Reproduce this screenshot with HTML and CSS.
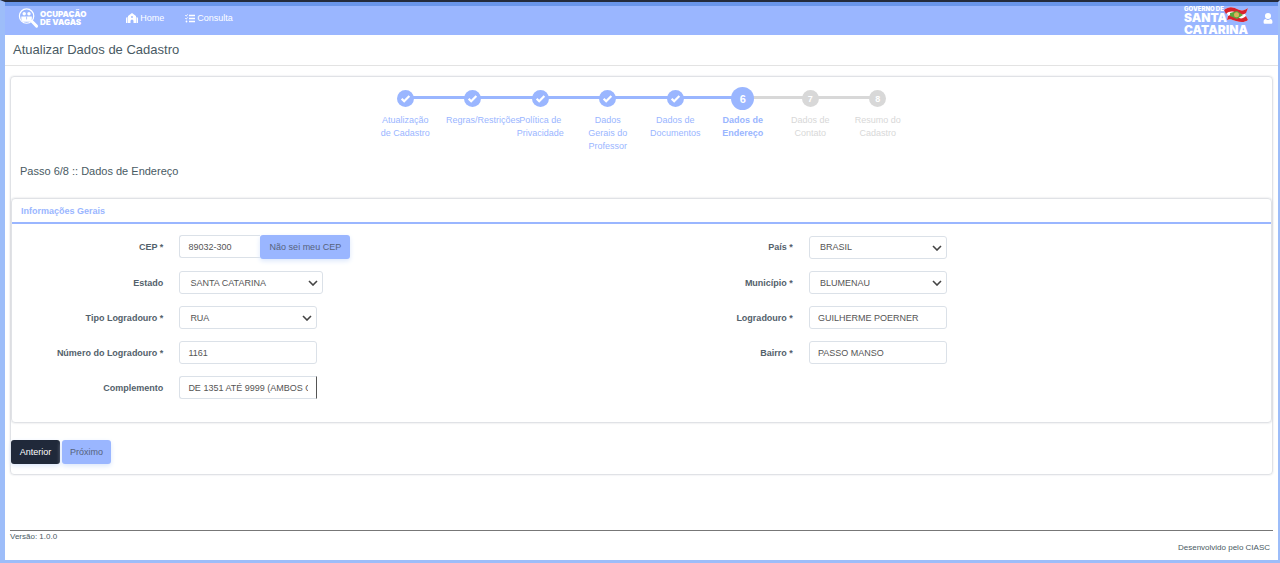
FILE: index.html
```html
<!DOCTYPE html>
<html lang="pt-BR">
<head>
    <meta charset="UTF-8">
    <meta name="viewport" content="width=device-width, initial-scale=1.0">
    <title>Atualizar Dados de Cadastro</title>
    <link rel="stylesheet" href="styles.css">
</head>
<body>
<div class="page">

    <!-- Top bar -->
    <header class="topbar">
        <a href="#" class="brand">
            <svg class="brand-icon" viewBox="0 0 22 22" fill="none" stroke="#fff">
                <circle cx="9" cy="9" r="7.500" stroke-width="1.300"/>
                <circle cx="6.500" cy="6.500" r="1.800" fill="#fff" stroke="none"/>
                <circle cx="11.500" cy="6.500" r="1.800" fill="#fff" stroke="none"/>
                <path d="M3.500 9.500h11v2a3.500 3.500 0 0 1-3.500 3.500H7a3.500 3.500 0 0 1-3.500-3.500z" fill="#fff" stroke="none"/>
                <path d="M9 9.500v3" stroke="#9ab6ff" stroke-width="0.800"/>
                <path d="M14.500 14.500l5 5" stroke-width="3" stroke-linecap="round"/>
            </svg>
            <span class="brand-text">OCUPAÇÃO<br>DE VAGAS</span>
        </a>
        <nav class="menu">
            <a href="#" class="menu-link">
                <svg class="icon-home" viewBox="0 0 24 20" fill="#fff">
                    <path d="M12 0l8 6v14h-5v-4a3 3 0 0 0-6 0v4H4V6z"/>
                    <path d="M3 8v12H1a1 1 0 0 1-1-1v-8a3 3 0 0 1 3-3zM21 8v12h2a1 1 0 0 0 1-1v-8a3 3 0 0 0-3-3z"/>
                    <circle cx="12" cy="8" r="1.800" fill="#9ab6ff"/>
                </svg>
                Home
            </a>
            <a href="#" class="menu-link">
                <svg class="icon-list" viewBox="0 0 20 18" fill="none" stroke="#fff" stroke-width="3">
                    <path d="M8 3h12M8 9h12M8 15h12"/>
                    <path d="M0.500 2.500l1.700 1.700L5.500 1M0.500 8.500l1.700 1.700L5.500 7" stroke-width="2"/>
                    <circle cx="3" cy="15" r="1.800" fill="#fff" stroke="none"/>
                </svg>
                Consulta
            </a>
        </nav>
        <div class="gov">
            <span class="gov-small">GOVERNO DE</span>
            <span class="gov-big">SANTA</span>
            <span class="gov-big">CATARINA</span>
            <svg class="gov-flag" viewBox="0 0 26 16">
                <path d="M1 3C6-1 10 0 14 2s7 2 11-1l-3 6 3 6c-4 3-8 2-12 1S8 11 4 13l1-5z" fill="#fff"/>
                <path d="M1 3C6-1 10 0 14 2s7 2 11-1l-2 5c-3 2-7 2-10 0S6 4 3 7z" fill="#d8232f"/>
                <path d="M4 13l1-4c3-2 6-1 9 1s6 2 9-1l2 4c-4 3-8 2-12 1S8 11 4 13z" fill="#d8232f"/>
                <path d="M7 6l7-2 6 4-6 4-7-3z" fill="#5da63c"/>
                <circle cx="13.500" cy="7.700" r="2.500" fill="#d9b35a"/>
            </svg>
        </div>
        <button type="button" class="user-btn" aria-label="Usuário">
            <svg viewBox="0 0 16 20" fill="#fff">
                <circle cx="8" cy="5.500" r="5.500"/>
                <path d="M4 11a6 6 0 0 0 8 0c2.500 0 4 2 4 4.500v2a2 2 0 0 1-2 2H2a2 2 0 0 1-2-2v-2C0 13 1.500 11 4 11z"/>
            </svg>
        </button>
    </header>

    <div class="title-bar">
        <h1>Atualizar Dados de Cadastro</h1>
    </div>

    <main class="content">
        <form class="wizard">

            <!-- Steps -->
            <ol class="steps">
                <li class="step done">
                    <span class="dot"><svg viewBox="0 0 10 10"><path d="M1.500 5.200l2.300 2.300 4.700-4.700"/></svg></span>
                    <span class="step-label">Atualização de Cadastro</span>
                </li>
                <li class="step done">
                    <span class="dot"><svg viewBox="0 0 10 10"><path d="M1.500 5.200l2.300 2.300 4.700-4.700"/></svg></span>
                    <span class="step-label">Regras/Restrições</span>
                </li>
                <li class="step done">
                    <span class="dot"><svg viewBox="0 0 10 10"><path d="M1.500 5.200l2.300 2.300 4.700-4.700"/></svg></span>
                    <span class="step-label">Política de Privacidade</span>
                </li>
                <li class="step done">
                    <span class="dot"><svg viewBox="0 0 10 10"><path d="M1.500 5.200l2.300 2.300 4.700-4.700"/></svg></span>
                    <span class="step-label">Dados Gerais do Professor</span>
                </li>
                <li class="step done">
                    <span class="dot"><svg viewBox="0 0 10 10"><path d="M1.500 5.200l2.300 2.300 4.700-4.700"/></svg></span>
                    <span class="step-label">Dados de Documentos</span>
                </li>
                <li class="step active">
                    <span class="dot">6</span>
                    <span class="step-label">Dados de Endereço</span>
                </li>
                <li class="step">
                    <span class="dot">7</span>
                    <span class="step-label">Dados de Contato</span>
                </li>
                <li class="step">
                    <span class="dot">8</span>
                    <span class="step-label">Resumo do Cadastro</span>
                </li>
            </ol>

            <h2 class="step-title">Passo 6/8 :: Dados de Endereço</h2>

            <!-- Address data -->
            <section class="panel">
                <h3 class="panel-title">Informações Gerais</h3>
                <div class="panel-body">
                    <div class="column">
                        <div class="row row-tall">
                            <label for="cep">CEP *</label>
                            <div class="field">
                                <input type="text" id="cep" class="input input-cep" value="89032-300">
                                <button type="button" class="btn btn-primary btn-cep">Não sei meu CEP</button>
                            </div>
                        </div>
                        <div class="row">
                            <label for="estado">Estado</label>
                            <div class="field">
                                <div class="select-box select-wide">
                                    <select id="estado" class="input"><option>SANTA CATARINA</option></select>
                                    <svg class="chevron" viewBox="0 0 10 6"><path d="M1 1l4 4 4-4"/></svg>
                                </div>
                            </div>
                        </div>
                        <div class="row">
                            <label for="tipo">Tipo Logradouro *</label>
                            <div class="field">
                                <div class="select-box">
                                    <select id="tipo" class="input"><option>RUA</option></select>
                                    <svg class="chevron" viewBox="0 0 10 6"><path d="M1 1l4 4 4-4"/></svg>
                                </div>
                            </div>
                        </div>
                        <div class="row">
                            <label for="numero">Número do Logradouro *</label>
                            <div class="field">
                                <input type="text" id="numero" class="input" value="1161">
                            </div>
                        </div>
                        <div class="row">
                            <label for="complemento">Complemento</label>
                            <div class="field">
                                <input type="text" id="complemento" class="input input-cut" value="DE 1351 ATÉ 9999 (AMBOS OS LADOS)">
                            </div>
                        </div>
                    </div>
                    <div class="column">
                        <div class="row row-tall">
                            <label for="pais">País *</label>
                            <div class="field">
                                <div class="select-box">
                                    <select id="pais" class="input"><option>BRASIL</option></select>
                                    <svg class="chevron" viewBox="0 0 10 6"><path d="M1 1l4 4 4-4"/></svg>
                                </div>
                            </div>
                        </div>
                        <div class="row">
                            <label for="municipio">Município *</label>
                            <div class="field">
                                <div class="select-box">
                                    <select id="municipio" class="input"><option>BLUMENAU</option></select>
                                    <svg class="chevron" viewBox="0 0 10 6"><path d="M1 1l4 4 4-4"/></svg>
                                </div>
                            </div>
                        </div>
                        <div class="row">
                            <label for="logradouro">Logradouro *</label>
                            <div class="field">
                                <input type="text" id="logradouro" class="input" value="GUILHERME POERNER">
                            </div>
                        </div>
                        <div class="row">
                            <label for="bairro">Bairro *</label>
                            <div class="field">
                                <input type="text" id="bairro" class="input" value="PASSO MANSO">
                            </div>
                        </div>
                    </div>
                </div>
            </section>

            <div class="actions">
                <button type="button" class="btn btn-dark">Anterior</button>
                <button type="button" class="btn btn-primary">Próximo</button>
            </div>
        </form>
    </main>

    <footer class="footer">
        <p>Versão: 1.0.0</p>
        <p class="credits">Desenvolvido pelo CIASC</p>
    </footer>

</div>
</body>
</html>
```

FILE: styles.css
```css
* {
    box-sizing: border-box;
}

body {
    margin: 0;
    font-family: "Liberation Sans", Arial, sans-serif;
    font-size: 9px;
    color: #495a63;
    background: #fff;
}

h1, h2, h3, p, ol {
    margin: 0;
    padding: 0;
    font-weight: normal;
}

/* Page frame */
.page {
    display: flex;
    flex-direction: column;
    min-height: 100vh;
    border: solid #9dbdf9;
    border-width: 2px 2px 3px 5px;
    border-top-color: #242a3a;
}

/* Top bar */
.topbar {
    display: flex;
    align-items: center;
    height: 33px;
    padding: 0 5px 5px 13px;
    border-top: 4px solid #6995ea;
    background: #9ab6ff;
    color: #fff;
}

.brand {
    display: flex;
    gap: 1px;
    align-items: center;
    color: #fff;
    text-decoration: none;
}

.brand-icon {
    width: 21px;
    height: 22px;
}

.brand-text {
    font-family: Inter, sans-serif;
    font-size: 8px;
    font-weight: 900;
    line-height: 8px;
}

.menu {
    display: flex;
    flex: 1;
    gap: 21px;
    margin-left: 40px;
}

.menu-link {
    display: flex;
    gap: 2px;
    align-items: center;
    color: #fff;
    font-size: 9px;
    text-decoration: none;
}

.icon-home {
    width: 12px;
    height: 10px;
}

.icon-list {
    width: 10px;
    height: 9px;
}

.gov {
    position: relative;
    display: flex;
    flex-direction: column;
    align-self: flex-start;
    margin-right: 15px;
    font-family: Inter, sans-serif;
    font-weight: 900;
}

.gov-small {
    font-size: 6px;
    line-height: 6px;
}

.gov-big {
    font-size: 12px;
    line-height: 12px;
}

.gov-flag {
    position: absolute;
    top: 1px;
    right: -1px;
    width: 26px;
    height: 16px;
}

.user-btn {
    width: 10px;
    height: 11px;
    padding: 0;
    border: 0;
    background: none;
}

.user-btn svg {
    display: block;
    width: 10px;
    height: 11px;
}

.title-bar {
    padding: 7px 8px;
    border-bottom: 1px solid #e3e3e3;
}

.title-bar h1 {
    font-size: 13px;
    line-height: 16px;
}

/* Content */
.content {
    padding: 10px 5px;
}

.wizard {
    border: 1px solid #e0e2e6;
    border-radius: 4px;
    box-shadow: 0 0 2px #dcdee2;
}

/* Steps */
.steps {
    display: flex;
    max-width: 540px;
    margin: 0 auto;
    padding-top: 10px;
    list-style: none;
}

.step {
    position: relative;
    display: flex;
    flex: 1 1 0;
    flex-direction: column;
    align-items: center;
    min-width: 0;
    color: #d8d8d8;
}

/* Line from the previous step */
.step + .step::before {
    content: "";
    position: absolute;
    top: 9px;
    right: 50%;
    width: 100%;
    height: 3px;
    background: #d8d8d8;
}

.step.done::before,
.step.active::before {
    background: #9ab6ff !important;
}

.dot {
    z-index: 1;
    display: flex;
    align-items: center;
    justify-content: center;
    width: 17px;
    height: 17px;
    margin: 3px 0;
    border-radius: 50%;
    background: #d8d8d8;
    color: #fff;
    font-weight: bold;
}

.dot svg {
    width: 11px;
    height: 11px;
    fill: none;
    stroke: #fff;
    stroke-width: 2;
}

.done,
.active {
    color: #9ab6ff;
}

.done .dot,
.active .dot {
    background: #9ab6ff;
}

.active .dot {
    width: 23px;
    height: 23px;
    margin: 0;
    font-size: 11px;
}

.active .step-label {
    font-weight: bold;
}

.step-label {
    width: 100%;
    margin-top: 4px;
    padding: 0 7px;
    line-height: 13px;
    text-align: center;
}

.step-title {
    padding: 11px 9px 19px;
    font-size: 11px;
    line-height: 15px;
}

/* Panel */
.panel {
    border: 1px solid #e0e2e6;
    border-radius: 4px;
    box-shadow: 0 0 2px #d4d6da;
}

.panel-title {
    padding: 6px 9px 5px;
    border-bottom: 2px solid #9ab6ff;
    color: #9ab6ff;
    font-size: 9px;
    font-weight: bold;
    line-height: 12px;
}

.panel-body {
    display: flex;
    padding: 11px 0 23px;
}

.column {
    display: flex;
    flex: 1;
    flex-direction: column;
    gap: 12px;
}

.row {
    display: flex;
    align-items: center;
}

.row-tall {
    min-height: 24px;
}

.row label {
    flex: 0 0 25%;
    padding-right: 6px;
    color: #53616b;
    font-weight: bold;
    text-align: right;
}

.field {
    display: flex;
    padding-left: 10px;
}

.input {
    width: 138px;
    height: 23px;
    padding: 0 8px;
    border: 1px solid #dbe1e8;
    border-radius: 3px;
    background: #fff;
    color: #555;
    font-family: inherit;
    font-size: 9px;
}

.input-cep {
    width: 81px;
    border-right: 0;
    border-radius: 3px 0 0 3px;
}

.input-cut {
    border-right-color: #555;
    border-radius: 3px 0 0 3px;
}

.select-box {
    position: relative;
    width: 138px;
}

.select-wide {
    width: 144px;
}

.select-box .input {
    display: block;
    width: 100%;
    padding: 0 10px;
    appearance: none;
}

.chevron {
    position: absolute;
    top: 9px;
    right: 5px;
    width: 10px;
    height: 6px;
    fill: none;
    stroke: #444;
    stroke-width: 1.6;
    pointer-events: none;
}

/* Buttons */
.btn {
    height: 24px;
    padding: 0 7px;
    border: 0;
    border-radius: 3px;
    box-shadow: 0 2px 5px #dbe7fb;
    font-family: inherit;
    font-size: 9px;
}

.btn-primary {
    background: #9ab6ff;
    color: #56627c;
}

.btn-dark {
    background: #20293a;
    color: #fff;
}

.btn-cep {
    width: 90px;
}

.actions {
    display: flex;
    gap: 2px;
    padding: 17px 0 10px;
}

.actions .btn {
    width: 49px;
}

/* Footer */
.footer {
    margin: auto 5px 0;
    padding-bottom: 7px;
    border-top: 1px solid #777;
    font-size: 8px;
    line-height: 11px;
}

.credits {
    padding-right: 3px;
    text-align: right;
}
```
